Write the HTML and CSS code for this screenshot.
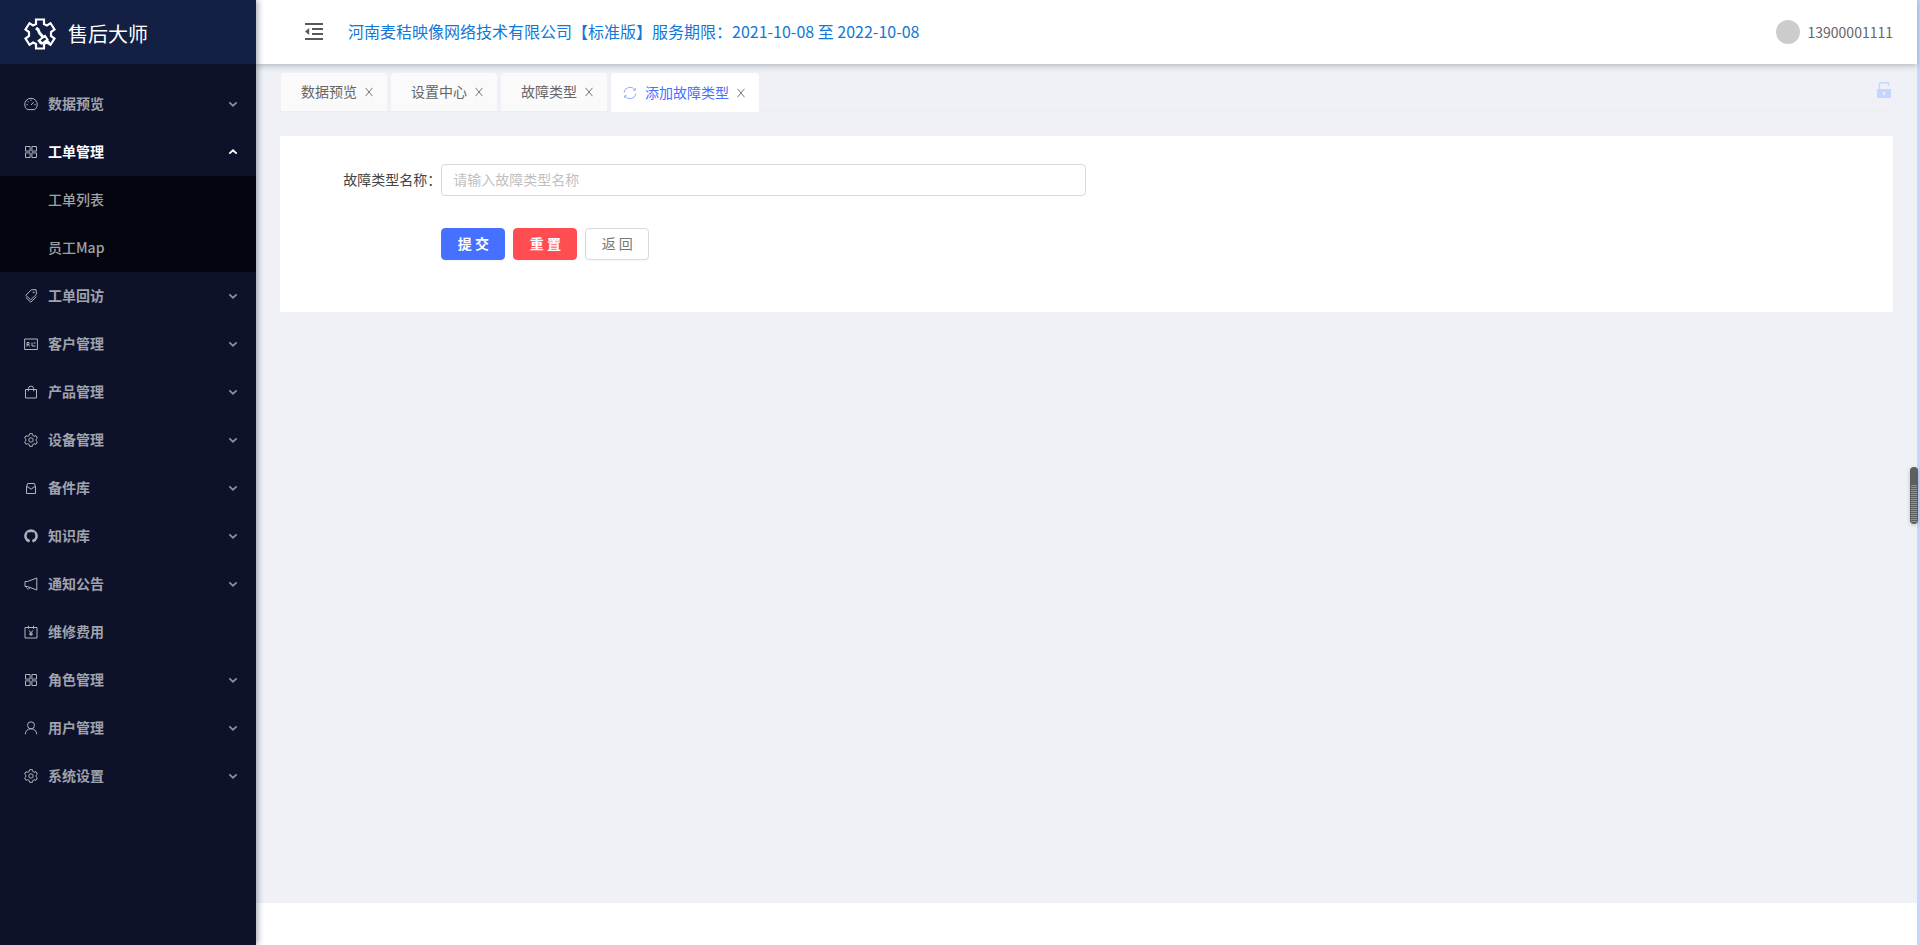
FILE: index.html
```html
<!DOCTYPE html>
<html lang="zh-CN">
<head>
    <meta charset="UTF-8">
    <meta name="viewport" content="width=device-width, initial-scale=1.0">
    <title>添加故障类型 - 售后大师</title>
    <link rel="stylesheet" href="styles.css">
</head>
<body>
    <!-- Shared icons -->
    <svg class="icon-defs" aria-hidden="true">
        <symbol id="icon-down" viewBox="0 0 10 10"><path d="M1.300 3.300L5 6.700L8.700 3.300" fill="none" stroke="currentColor" stroke-width="1.800"/></symbol>
        <symbol id="icon-grid" viewBox="0 0 14 14"><path d="M1.500 1.500h4.600v4.600H1.500zM7.900 1.500h4.600v4.600H7.900zM1.500 7.900h4.600v4.600H1.500zM7.900 7.900h4.600v4.600H7.900z"/></symbol>
        <symbol id="icon-setting" viewBox="0 0 14 14"><path d="M5.600.7h2.800l.5 1.900 1.200.7 1.900-.6 1.400 2.400L12 6.400v1.200l1.400 1.300-1.400 2.400-1.900-.6-1.200.7-.5 1.900H5.600l-.5-1.900-1.200-.7-1.900.6L.6 8.900 2 7.600V6.400L.6 5.100 2 2.700l1.900.6 1.200-.7z"/><circle cx="7" cy="7" r="2.200"/></symbol>
    </svg>

    <div class="layout">
        <aside class="sider">
            <div class="logo">
                <svg class="logo-icon" viewBox="0 0 32 32">
                    <path d="M12 30.500h8v-4.500l3-1.500 3.500 2.300 4-6.300-3.500-2.500v-4l3.500-2.500-4-6.300L23 7.500 20 6V1.500h-8V6L9 7.500 5.500 5.200l-4 6.300L5 14v4l-3.500 2.500 4 6.300L9 24.500l3 1.500z" fill="none" stroke="#fff" stroke-width="2.200"/>
                    <path d="M12 10l2 1.500 1.500 3.500 3.500 4" fill="none" stroke="#fff" stroke-width="3"/>
                    <path d="M15.500 22l5.500-4 2.500 3.500-5.500 4zM17 26l-3-4M23 21.500l3 4.500" fill="#141f44" stroke="#fff" stroke-width="2"/>
                </svg>
                <span>售后大师</span>
            </div>

            <nav class="menu">
                <button class="menu-item" type="button">
                    <svg class="icon" viewBox="0 0 14 14"><path d="M3.200 12.600a6.300 6.300 0 1 1 7.600 0zM7 8L9.600 5.200M7 2.600v1.300M2.400 7.700h1.300M10.300 7.700h1.300M3.800 4.400l.9.900"/></svg>
                    <span>数据预览</span>
                    <svg class="arrow"><use href="#icon-down"/></svg>
                </button>
                <button class="menu-item open" type="button" aria-expanded="true">
                    <svg class="icon"><use href="#icon-grid"/></svg>
                    <span>工单管理</span>
                    <svg class="arrow"><use href="#icon-down"/></svg>
                </button>
                <div class="submenu">
                    <a href="#">工单列表</a>
                    <a href="#">员工Map</a>
                </div>
                <button class="menu-item" type="button">
                    <svg class="icon" viewBox="0 0 14 14"><path d="M7.300.8l4.700-.2.500 4.700-5.800 5.500L1.800 6.300zM1.800 8.500l4.900 4.700 5.800-5.500"/><circle cx="9.700" cy="3.400" r=".5"/></svg>
                    <span>工单回访</span>
                    <svg class="arrow"><use href="#icon-down"/></svg>
                </button>
                <button class="menu-item" type="button">
                    <svg class="icon" viewBox="0 0 14 14"><path d="M.6 2h12.800v10.500H.6zM3 9.500v-4h2v2H3M4.500 7.500l1 2M8 5.500v3.500M9.500 6h2M8 9h3.500"/></svg>
                    <span>客户管理</span>
                    <svg class="arrow"><use href="#icon-down"/></svg>
                </button>
                <button class="menu-item" type="button">
                    <svg class="icon" viewBox="0 0 14 14"><path d="M1.500 4.500h11v8.500h-11zM4.300 6.300V3.800a2.700 2.700 0 0 1 5.400 0v2.500"/></svg>
                    <span>产品管理</span>
                    <svg class="arrow"><use href="#icon-down"/></svg>
                </button>
                <button class="menu-item" type="button">
                    <svg class="icon"><use href="#icon-setting"/></svg>
                    <span>设备管理</span>
                    <svg class="arrow"><use href="#icon-down"/></svg>
                </button>
                <button class="menu-item" type="button">
                    <svg class="icon" viewBox="0 0 14 14"><path d="M2.500 6L3.500 2.500h7l1 3.500v6.500h-9zM2.500 6H4.700Q5.200 8 7 8t2.300-2h2.200"/></svg>
                    <span>备件库</span>
                    <svg class="arrow"><use href="#icon-down"/></svg>
                </button>
                <button class="menu-item" type="button">
                    <svg class="icon" viewBox="0 0 14 14"><path d="M5 12.600v-2.400C3.300 9.500 2.700 8.500 2.700 6.900c0-.9.300-1.500.7-2l-.1-1.800 1.900.6c1.100-.3 2.500-.3 3.600 0l1.900-.6-.1 1.800c.4.500.7 1.100.7 2 0 1.600-.6 2.600-2.300 3.300v2.400A6 6 0 1 0 5 12.600z" fill="#a9abb5" stroke="none"/><path d="M5 12.700A6 6 0 1 1 9 12.700M9 12.700v-2.500M5 12.700v-2.500M5 11.200c-1 .2-1.600-.2-2-1" stroke-width="1.600"/><circle cx="7" cy="6.900" r="3.700" fill="#0d122a" stroke="none"/></svg>
                    <span>知识库</span>
                    <svg class="arrow"><use href="#icon-down"/></svg>
                </button>
                <button class="menu-item" type="button">
                    <svg class="icon" viewBox="0 0 14 14"><path d="M1 4.500h2.500L12.800 1v12L3.500 9.500H1zM2.500 9.500c0 3 3 3.200 3.700.9"/></svg>
                    <span>通知公告</span>
                    <svg class="arrow"><use href="#icon-down"/></svg>
                </button>
                <a class="menu-item" href="#">
                    <svg class="icon" viewBox="0 0 14 14"><path d="M1 2.500h12v10.500H1zM4.500.8v3M9.500.8v3M5 5.300l2 2.500 2-2.500M7 7.800v3M5.300 8.200h3.400M5.300 9.600h3.400"/></svg>
                    <span>维修费用</span>
                </a>
                <button class="menu-item" type="button">
                    <svg class="icon"><use href="#icon-grid"/></svg>
                    <span>角色管理</span>
                    <svg class="arrow"><use href="#icon-down"/></svg>
                </button>
                <button class="menu-item" type="button">
                    <svg class="icon" viewBox="0 0 14 14"><circle cx="7" cy="4.300" r="3.500"/><path d="M1.300 13.300c.2-3.300 2-5.500 5.700-5.500s5.500 2.200 5.700 5.500"/></svg>
                    <span>用户管理</span>
                    <svg class="arrow"><use href="#icon-down"/></svg>
                </button>
                <button class="menu-item" type="button">
                    <svg class="icon"><use href="#icon-setting"/></svg>
                    <span>系统设置</span>
                    <svg class="arrow"><use href="#icon-down"/></svg>
                </button>
            </nav>
        </aside>

        <div class="main">
            <header class="header">
                <button class="fold" type="button" aria-label="收起菜单">
                    <svg viewBox="0 0 20 20"><path d="M1 2h18M8 7h11M8 12h11M1 17h18" fill="none" stroke="#595959" stroke-width="2"/><path d="M5.200 6v7L1 9.500z" fill="#595959"/></svg>
                </button>
                <span class="company">河南麦秸映像网络技术有限公司【标准版】服务期限：2021-10-08 至 2022-10-08</span>
                <div class="user">
                    <span class="avatar"></span>
                    <span>13900001111</span>
                </div>
            </header>

            <main class="content">
                <div class="tabs">
                    <div class="tab"><a href="#">数据预览</a><button type="button" aria-label="关闭"><svg viewBox="0 0 8 10"><path d="M.5.800l7 8.400M7.500.800L.5 9.200"/></svg></button></div>
                    <div class="tab"><a href="#">设置中心</a><button type="button" aria-label="关闭"><svg viewBox="0 0 8 10"><path d="M.5.800l7 8.400M7.500.800L.5 9.200"/></svg></button></div>
                    <div class="tab"><a href="#">故障类型</a><button type="button" aria-label="关闭"><svg viewBox="0 0 8 10"><path d="M.5.800l7 8.400M7.500.800L.5 9.200"/></svg></button></div>
                    <div class="tab active">
                        <svg class="reload" viewBox="0 0 14 14"><path d="M1 6.500A6 6 0 0 1 12 4M13 7.500A6 6 0 0 1 2 10M12.300 2V4.300H10.300M1.700 12V9.700h2"/></svg>
                        <a href="#">添加故障类型</a><button type="button" aria-label="关闭"><svg viewBox="0 0 8 10"><path d="M.5.800l7 8.400M7.500.800L.5 9.200"/></svg></button>
                    </div>
                    <button class="lock" type="button" aria-label="锁定标签">
                        <svg viewBox="0 0 14 16"><path d="M2.500 8V1.500Q2.500.7 3.300.7h7.400q.8 0 .8.8V4" fill="none" stroke="#c2d6ff" stroke-width="1.400"/><path d="M0 7h14v9H0zM6 10v3h2v-3z" fill="#c2d6ff" fill-rule="evenodd"/></svg>
                    </button>
                </div>

                <form class="card">
                    <div class="form-row">
                        <label for="faultName">故障类型名称：</label>
                        <input type="text" id="faultName" placeholder="请输入故障类型名称">
                    </div>
                    <div class="form-actions">
                        <button class="btn primary" type="submit">提 交</button>
                        <button class="btn danger" type="reset">重 置</button>
                        <button class="btn" type="button">返 回</button>
                    </div>
                </form>
            </main>
            <footer class="footer"></footer>
        </div>
    </div>

    <div class="gauge"><div class="gauge-fill"></div></div>
</body>
</html>
```
FILE: styles.css
```css
* {
    box-sizing: border-box;
}

body {
    margin: 0;
    font-family: "Noto Sans CJK SC", sans-serif;
    font-size: 14px;
    line-height: 22px;
    color: #666;
    background-color: #fff;
}

button,
input {
    font-family: inherit;
    font-size: 14px;
}

button {
    cursor: pointer;
}

a {
    color: inherit;
    text-decoration: none;
}

svg {
    display: block;
}

.icon-defs {
    position: absolute;
    width: 0;
    height: 0;
}

.layout {
    display: flex;
    min-height: 100vh;
    border-right: 3px solid #c2d6ff;
}

/* Sidebar */
.sider {
    flex: 0 0 256px;
    background-color: #0d122a;
    box-shadow: 2px 0 6px rgba(0, 21, 41, 0.35);
    z-index: 2;
}

.logo {
    display: flex;
    align-items: center;
    gap: 12px;
    height: 64px;
    padding: 4px 24px 0;
    background-color: #141f44;
    color: #fff;
    font-size: 20px;
}

.logo-icon {
    width: 32px;
    height: 32px;
}

.menu {
    padding-top: 16px;
}

.menu-item {
    display: flex;
    align-items: center;
    width: 100%;
    height: 48px;
    padding: 0 18px 0 24px;
    border: none;
    background: none;
    color: #a0a2ac;
    font-weight: 600;
}

.menu-item span {
    padding-bottom: 2px;
}

.menu-item.open {
    color: #fff;
}

.icon {
    width: 14px;
    height: 14px;
    margin-right: 10px;
    fill: none;
    stroke: #b2b4bd;
    stroke-width: 1;
}

.arrow {
    width: 10px;
    height: 10px;
    margin-left: auto;
    color: #8a8c98;
}

.open .arrow {
    color: #fff;
    transform: rotate(180deg);
}

.submenu {
    background-color: #03050f;
    color: #a0a1a5;
    font-weight: 500;
}

.submenu a {
    display: block;
    height: 48px;
    padding-left: 48px;
    line-height: 46px;
}

/* Header */
.main {
    display: flex;
    flex-direction: column;
    flex: 1;
    min-width: 0;
}

.header {
    display: flex;
    align-items: center;
    height: 64px;
    padding: 0 24px 0 48px;
    background-color: #fff;
    box-shadow: 0 2px 6px rgba(0, 21, 41, 0.25);
    z-index: 1;
}

.fold {
    width: 20px;
    height: 20px;
    margin-right: 24px;
    padding: 0;
    border: none;
    background: none;
}

.company {
    padding-bottom: 2px;
    color: #1078d8;
    font-size: 16px;
}

.user {
    display: flex;
    align-items: center;
    gap: 8px;
    margin-left: auto;
}

.avatar {
    width: 24px;
    height: 24px;
    border-radius: 50%;
    background-color: #ccc;
}

/* Tabs */
.content {
    flex: 1;
    padding: 9px 24px 24px;
    background-color: #eff1f6;
}

.tabs {
    display: flex;
    gap: 4px;
    height: 39px;
    margin-bottom: 24px;
    padding-left: 1px;
    border-bottom: 1px solid #edeef3;
}

.tab {
    display: flex;
    align-items: center;
    gap: 8px;
    height: 38px;
    padding: 0 14px 0 20px;
    border-radius: 4px 4px 0 0;
    background-color: #fafafa;
}

.tab a {
    padding-bottom: 2px;
}

.tab.active {
    height: 39px;
    padding-left: 12px;
    background-color: #fff;
    color: #4670ff;
}

.tab button {
    width: 8px;
    padding: 0;
    border: none;
    background: none;
}

.tab button svg {
    width: 8px;
    height: 10px;
    fill: none;
    stroke: #777;
}

.tab .reload {
    width: 14px;
    height: 14px;
    fill: none;
    stroke: #8fb0ff;
}

.lock {
    align-self: flex-start;
    width: 14px;
    margin: 9px 2px 0 auto;
    padding: 0;
    border: none;
    background: none;
}

/* Form */
.card {
    padding: 28px 0 52px;
    border-radius: 2px;
    background-color: #fff;
}

.form-row {
    display: flex;
    align-items: center;
    margin-bottom: 32px;
}

.form-row label {
    width: 10%;
    padding-bottom: 2px;
    color: #444;
    text-align: right;
    white-space: nowrap;
}

.form-row input {
    width: 40%;
    height: 32px;
    padding: 3px 11px 5px;
    border: 1px solid #d9d9d9;
    border-radius: 4px;
    outline: none;
}

.form-row input::placeholder {
    color: #bfbfbf;
}

.form-actions {
    display: flex;
    gap: 8px;
    padding-left: 10%;
}

.btn {
    width: 64px;
    height: 32px;
    padding: 0 0 2px;
    border: 1px solid #d9d9d9;
    border-radius: 4px;
    background-color: #fff;
    color: #777;
    box-shadow: 0 2px 0 rgba(0, 0, 0, 0.02);
}

.btn.primary {
    border-color: #4670ff;
    background-color: #4670ff;
    color: #fff;
    font-weight: 600;
}

.btn.danger {
    border-color: #ff4d52;
    background-color: #ff4d52;
    color: #fff;
    font-weight: 600;
}

.footer {
    height: 42px;
    background-color: #fff;
}

/* Floating gauge on the right edge */
.gauge {
    position: fixed;
    top: 467px;
    right: 2px;
    width: 8px;
    height: 57px;
    padding: 18px 1px 2px;
    border-radius: 4px;
    background-color: #5c5e60;
    box-shadow: 0 1px 4px rgba(0, 0, 0, 0.2);
}

.gauge-fill {
    height: 100%;
    background: repeating-linear-gradient(#3fc272 0, #3fc272 1px, #5c5e60 1px, #5c5e60 2px);
}
```
